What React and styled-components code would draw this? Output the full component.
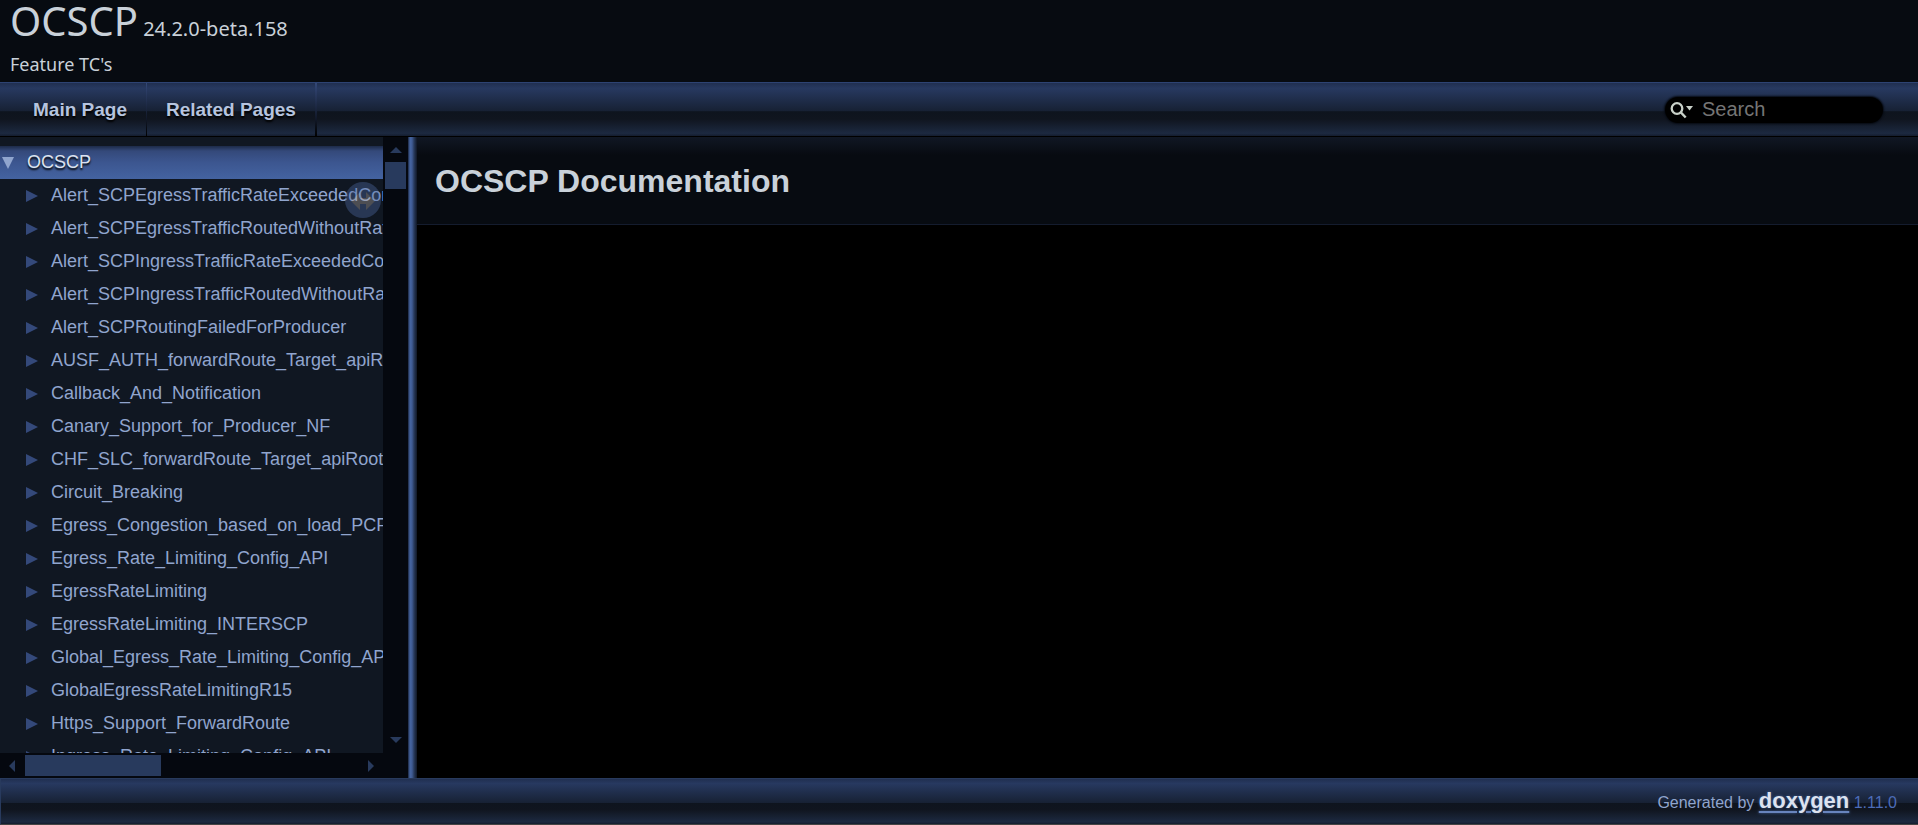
import React from 'react'
import styled, { createGlobalStyle } from 'styled-components'

const GlobalStyle = createGlobalStyle`
    * { box-sizing: border-box; }
    body {
        margin: 0;
        background: #000;
        color: #c9d1d9;
        font-family: "Liberation Sans", Arial, sans-serif;
    }
`;

const pages = [
    'Alert_SCPEgressTrafficRateExceededConfiguredLimit',
    'Alert_SCPEgressTrafficRoutedWithoutRateLimitTreatment',
    'Alert_SCPIngressTrafficRateExceededConfiguredLimit',
    'Alert_SCPIngressTrafficRoutedWithoutRateLimitTreatment',
    'Alert_SCPRoutingFailedForProducer',
    'AUSF_AUTH_forwardRoute_Target_apiRoot',
    'Callback_And_Notification',
    'Canary_Support_for_Producer_NF',
    'CHF_SLC_forwardRoute_Target_apiRoot',
    'Circuit_Breaking',
    'Egress_Congestion_based_on_load_PCF',
    'Egress_Rate_Limiting_Config_API',
    'EgressRateLimiting',
    'EgressRateLimiting_INTERSCP',
    'Global_Egress_Rate_Limiting_Config_API',
    'GlobalEgressRateLimitingR15',
    'Https_Support_ForwardRoute',
    'Ingress_Rate_Limiting_Config_API',
]

const Arrow = ({ open }) => (
    <ArrowIcon viewBox="0 0 12 12" $open={open}>
        <path d={open ? 'M0 0h12L6 12z' : 'M0 0l12 6L0 12z'} />
    </ArrowIcon>
)

const Header = () => (
    <TitleArea>
        <ProjectName>OCSCP<ProjectNumber> 24.2.0-beta.158</ProjectNumber></ProjectName>
        <ProjectBrief>Feature TC's</ProjectBrief>
    </TitleArea>
)

const Navbar = () => (
    <TabBar>
        <Tab href="#main" $first>Main Page</Tab>
        <Tab href="#pages" $last>Related Pages</Tab>
        <SearchBox>
            <SearchIcon viewBox="0 0 24 18">
                <circle cx="7" cy="7.5" r="5.3" fill="none" stroke="#c9d1c9" strokeWidth="2.3" />
                <path d="M10.5 11l5.2 5.5" stroke="#c9d1c9" strokeWidth="2.5" />
                <path d="M16 5h7l-3.5 4.5z" fill="#c9d1c9" />
            </SearchIcon>
            <SearchField type="text" placeholder="Search" aria-label="Search" />
        </SearchBox>
    </TabBar>
)

const Sidebar = () => (
    <SideNav>
        <Tree>
            <RootItem>
                <Arrow open />
                <RootLink href="#ocscp">OCSCP</RootLink>
            </RootItem>
            {pages.map((page) => (
                <Item key={page}>
                    <Arrow />
                    <ItemLink href={'#' + page}>{page}</ItemLink>
                </Item>
            ))}
            <SyncButton aria-label="Toggle panel synchronisation">
                <svg width="36" height="36" viewBox="0 0 36 36">
                    <circle cx="18" cy="18" r="18" fill="#4c67a0" />
                    <path d="M6 19l9-9v6h6v-6l9 9-9 9v-6h-6v6z" fill="#a8a09c" />
                </svg>
            </SyncButton>
        </Tree>
        <VScroll>
            <ScrollArrow viewBox="0 0 12 6"><path d="M0 6l6-6 6 6z" /></ScrollArrow>
            <VThumb />
            <ScrollArrow viewBox="0 0 12 6"><path d="M0 0l6 6 6-6z" /></ScrollArrow>
        </VScroll>
        <HScroll>
            <SideArrow viewBox="0 0 6 12"><path d="M6 0L0 6l6 6z" /></SideArrow>
            <HThumb />
            <SideArrow viewBox="0 0 6 12"><path d="M0 0l6 6-6 6z" /></SideArrow>
        </HScroll>
        <ScrollCorner />
    </SideNav>
)

const App = () => (
    <Page>
        <GlobalStyle />
        <Header />
        <Navbar />
        <Middle>
            <Sidebar />
            <Splitter />
            <Content>
                <ContentHeader>
                    <Title>OCSCP Documentation</Title>
                </ContentHeader>
            </Content>
        </Middle>
        <Footer>
            Generated by <DoxygenLink href="#doxygen">doxygen</DoxygenLink> <Version>1.11.0</Version>
        </Footer>
    </Page>
)

const barGradient = `linear-gradient(
    #202f50 0%, #273960 10%, #172134 53%, #0e141e 54%, #10151f 68%, #1c2940 95%, #141d2e 100%
)`;

const Page = styled.div`
    display: flex;
    flex-direction: column;
    height: 100vh;
`;

const TitleArea = styled.header`
    flex: none;
    padding: 0 10px;
    height: 82px;
    background: #070b11;
    font-family: "Noto Sans", sans-serif;
`;

const ProjectName = styled.div`
    font-size: 40px;
    line-height: 42px;
`;

const ProjectNumber = styled.span`
    font-size: 20px;
`;

const ProjectBrief = styled.div`
    margin-top: 2px;
    font-size: 18px;
    line-height: 24px;
`;

const TabBar = styled.nav`
    flex: none;
    display: flex;
    height: 55px;
    border-top: 1px solid #2d4373;
    border-bottom: 1px solid #000;
    background: ${barGradient};
`;

const Tab = styled.a`
    padding: 0 19px 0 ${(props) => (props.$first ? '33px' : '19px')};
    border-right: ${(props) => (props.$last ? '2px' : '1px')} solid;
    border-image: linear-gradient(#34497a, #000) 1;
    color: #b6c4df;
    font-size: 19px;
    font-weight: bold;
    line-height: 54px;
    text-decoration: none;
    text-shadow: 0 2px 2px #000;
`;

const SearchBox = styled.label`
    display: flex;
    align-items: center;
    align-self: center;
    width: 218px;
    height: 26px;
    margin: 0 35px 0 auto;
    padding-left: 5px;
    border-radius: 13px;
    background: #000;
    box-shadow: 0 0 2px 1px #060a12;
`;

const SearchIcon = styled.svg`
    flex: none;
    width: 24px;
    height: 18px;
`;

const SearchField = styled.input`
    min-width: 0;
    flex: 1;
    margin-left: 8px;
    padding: 0;
    border: 0;
    outline: 0;
    background: transparent;
    color: #909090;
    font: 20px "Liberation Sans", Arial, sans-serif;

    &::placeholder {
        color: #757575;
    }
`;

const Middle = styled.div`
    display: flex;
    flex: 1;
    min-height: 0;
`;

const SideNav = styled.aside`
    flex: none;
    display: grid;
    grid-template: minmax(0, 1fr) 25px / minmax(0, 1fr) 25px;
    width: 408px;
    background: #05080f;
`;

const Tree = styled.div`
    position: relative;
    overflow: hidden;
    padding-top: 9px;
    background: #101722;
`;

const Item = styled.div`
    display: flex;
    align-items: center;
    height: 33px;
    padding-left: 26px;
    gap: 13px;
    white-space: nowrap;
`;

const RootItem = styled(Item)`
    padding-left: 2px;
    background: linear-gradient(#1c2a48 0, #34497a 5px, #3c5690 50%, #4463a0 100%);
`;

const ItemLink = styled.a`
    color: #90a5ce;
    font-size: 18px;
    line-height: 33px;
    text-decoration: none;
`;

const RootLink = styled(ItemLink)`
    color: #dce2ef;
    text-shadow: 0 2px 2px #000;
`;

const ArrowIcon = styled.svg`
    flex: none;
    width: 12px;
    height: 12px;
    fill: ${(props) => (props.$open ? '#90a5ce' : '#34497a')};
`;

const SyncButton = styled.button`
    position: absolute;
    top: 45px;
    right: 2px;
    padding: 0;
    border: 0;
    background: none;
    line-height: 0;
    opacity: 0.4;
`;

const VScroll = styled.div`
    display: flex;
    flex-direction: column;
    align-items: center;
    padding: 10px 0;
`;

const ScrollArrow = styled.svg`
    flex: none;
    width: 12px;
    height: 6px;
    fill: #283a5d;
`;

const VThumb = styled.div`
    width: 21px;
    height: 27px;
    margin: 9px 0 auto;
    background: #283a5d;
`;

const HScroll = styled.div`
    display: flex;
    align-items: center;
    padding: 0 9px;
`;

const SideArrow = styled(ScrollArrow)`
    width: 6px;
    height: 12px;
`;

const HThumb = styled.div`
    width: 136px;
    height: 21px;
    margin: 0 auto 0 10px;
    background: #283a5d;
`;

const ScrollCorner = styled.div`
    background: #05080f;
`;

const Splitter = styled.div`
    flex: none;
    width: 9px;
    background: linear-gradient(90deg, #1a2640 0, #4665a2 2px, #3f5b93 4px, #283a5d 6px, #101725 100%);
`;

const Content = styled.main`
    flex: 1;
    min-width: 0;
    background: #000;
`;

const ContentHeader = styled.div`
    height: 88px;
    padding: 0 18px;
    border-bottom: 1px solid #141c2e;
    background: linear-gradient(#101724 0, #070b11 18px);
`;

const Title = styled.h1`
    margin: 0;
    color: #c9d1d9;
    font-size: 32px;
    line-height: 88px;
`;

const Footer = styled.footer`
    flex: none;
    height: 47px;
    padding-right: 21px;
    border: 1px solid #283a5d;
    border-right: 0;
    border-bottom: 1px solid #444;
    background: ${barGradient};
    color: #90a5ce;
    font-size: 16px;
    line-height: 43px;
    text-align: right;
`;

const DoxygenLink = styled.a`
    color: #dce2ef;
    font-size: 22px;
    font-weight: bold;
    text-decoration-line: underline;
    text-decoration-color: #6884bd;
    text-decoration-thickness: 2px;
    text-underline-offset: 3px;
    text-shadow: 0 0 3px #4665a2;
`;

const Version = styled.span`
    color: #4c6cb8;
`;

export default App;
